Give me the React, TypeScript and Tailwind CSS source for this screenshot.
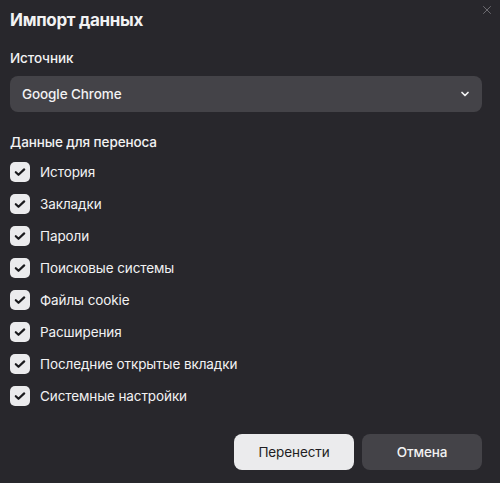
import { ChevronDown, X } from "lucide-react";

const items = [
  "История",
  "Закладки",
  "Пароли",
  "Поисковые системы",
  "Файлы cookie",
  "Расширения",
  "Последние открытые вкладки",
  "Системные настройки",
];

function CheckIcon() {
  return (
    <svg width="12" height="12" viewBox="0 0 12 12" fill="none">
      <path
        d="M1.8 6.2l2.7 2.6L10.2 3.4"
        stroke="#1a1a1d"
        strokeWidth="2.2"
        strokeLinecap="round"
        strokeLinejoin="round"
      />
    </svg>
  );
}

export default function App() {
  return (
    <div
      className="relative w-[500px] h-[483px] bg-[#28272c] px-[10px] pt-[8px] text-[#f2f2f3] overflow-hidden"
      style={{ fontFamily: "Inter, 'Noto Sans', sans-serif" }}
    >
      <button className="absolute right-[6px] top-[3px] text-[#77767b]">
        <X className="w-[14px] h-[14px]" strokeWidth={1.5} />
      </button>

      <h1 className="h-6 leading-6 text-[17px] font-bold tracking-[-0.3px]">
        Импорт данных
      </h1>

      <div className="mt-4 h-5 leading-5 text-[13.5px] font-medium tracking-[-0.1px]">
        Источник
      </div>

      <div className="mt-2 h-9 w-[472px] rounded-lg bg-[#444348] flex items-center justify-between pl-3 pr-[11px]">
        <span className="text-[13.5px] font-medium tracking-[-0.1px]">Google Chrome</span>
        <ChevronDown className="w-3 h-3" strokeWidth={3.5} />
      </div>

      <div className="mt-5 h-5 leading-5 text-[13.5px] font-medium tracking-[-0.1px]">
        Данные для переноса
      </div>

      <ul className="mt-1">
        {items.map((label) => (
          <li key={label} className="h-8 flex items-center gap-[10px]">
            <span className="w-5 h-5 rounded-[5px] bg-[#ebebed] flex items-center justify-center">
              <CheckIcon />
            </span>
            <span className="text-[13.5px] tracking-[-0.1px]">{label}</span>
          </li>
        ))}
      </ul>

      <div className="mt-[22px] flex justify-end gap-2 w-[472px]">
        <button className="w-[120px] h-9 rounded-lg bg-[#ebebed] text-[#1f1e23] text-[13.5px] tracking-[-0.1px]">
          Перенести
        </button>
        <button className="w-[120px] h-9 rounded-lg bg-[#444348] text-[#f2f2f3] text-[13.5px] font-medium tracking-[-0.1px]">
          Отмена
        </button>
      </div>
    </div>
  );
}
